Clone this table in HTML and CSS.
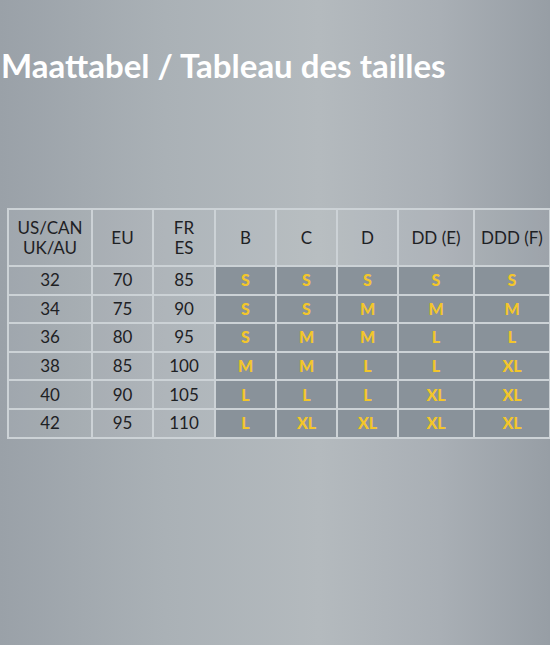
FILE: index.html
```html
<!DOCTYPE html>
<html lang="nl">
<head>
    <meta charset="UTF-8">
    <meta name="viewport" content="width=device-width, initial-scale=1.0">
    <title>Maattabel</title>
    <link rel="stylesheet" href="styles.css">
</head>
<body>
    <h1 class="title">Maattabel / Tableau des tailles</h1>

    <table class="size-table">
        <colgroup>
            <col class="col-us">
            <col class="col-eu">
            <col class="col-fr">
            <col class="col-cup">
            <col class="col-cup">
            <col class="col-cup">
            <col class="col-wide">
            <col class="col-wide">
        </colgroup>
        <thead>
            <tr>
                <th>US/CAN<br>UK/AU</th>
                <th>EU</th>
                <th>FR<br>ES</th>
                <th>B</th>
                <th>C</th>
                <th>D</th>
                <th>DD (E)</th>
                <th>DDD (F)</th>
            </tr>
        </thead>
        <tbody id="rows"></tbody>
    </table>

    <script>
        const rows = [
            [32, 70, 85, 'S', 'S', 'S', 'S', 'S'],
            [34, 75, 90, 'S', 'S', 'M', 'M', 'M'],
            [36, 80, 95, 'S', 'M', 'M', 'L', 'L'],
            [38, 85, 100, 'M', 'M', 'L', 'L', 'XL'],
            [40, 90, 105, 'L', 'L', 'L', 'XL', 'XL'],
            [42, 95, 110, 'L', 'XL', 'XL', 'XL', 'XL']
        ];

        const tbody = document.getElementById('rows');
        rows.forEach(row => {
            const tr = document.createElement('tr');
            row.forEach((value, index) => {
                const td = document.createElement('td');
                td.textContent = value;
                if (index > 2) td.className = 'size';
                tr.appendChild(td);
            });
            tbody.appendChild(tr);
        });
    </script>
</body>
</html>
```

FILE: styles.css
```css
:root {
    --line-color: #ccd2d6;
    --size-bg: #89929a;
    --size-text: #f3c62b;
    --text-color: #1e2124;
}

* {
    box-sizing: border-box;
    margin: 0;
    padding: 0;
}

body {
    width: 550px;
    height: 645px;
    overflow: hidden;
    font-family: 'Lato', sans-serif;
    background: linear-gradient(90deg, #9aa1a8 0%, #aab1b6 30%, #b4babe 58%, #a9afb5 80%, #979ea5 100%);
    color: var(--text-color);
}

.title {
    padding: 45px 0 0 1px;
    font-size: 33px;
    line-height: 40px;
    font-weight: 700;
    color: #fff;
}

.size-table {
    margin: 123px 0 0 7px;
    border-collapse: collapse;
    table-layout: fixed;
    width: 543px;
    border: 2px solid var(--line-color);
}

.col-us { width: 84px; }
.col-eu { width: 61px; }
.col-fr { width: 62px; }
.col-cup { width: 61px; }
.col-wide { width: 76px; }

th,
td {
    border: 2px solid var(--line-color);
    text-align: center;
    font-weight: 400;
    font-size: 17px;
    background: rgba(255, 255, 255, 0.06);
}

th {
    height: 57px;
    line-height: 20px;
}

td {
    height: 28.6px;
    line-height: 20px;
}

td.size {
    background: var(--size-bg);
    color: var(--size-text);
    font-weight: 900;
    font-size: 16px;
}
```
